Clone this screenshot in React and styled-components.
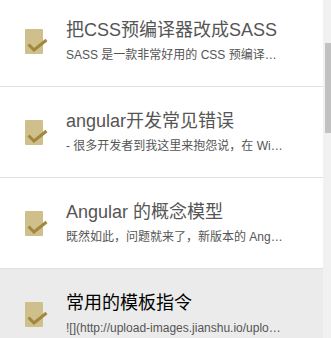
import React, { useLayoutEffect, useRef } from 'react';
import styled, { createGlobalStyle } from 'styled-components';

const GlobalStyle = createGlobalStyle`
  html, body {
    margin: 0;
    padding: 0;
    overflow: hidden;
    background: #fff;
  }
  body {
    font-family: "Liberation Sans", "Noto Sans CJK SC", sans-serif;
  }
`;

const Frame = styled.div`
  position: relative;
  height: 338px;
`;

const List = styled.ul`
  list-style: none;
  margin: 0;
  padding: 66px 8px 20px 0;
  height: 338px;
  box-sizing: border-box;
  overflow-y: scroll;
  scrollbar-width: none;

  &::-webkit-scrollbar {
    display: none;
  }
`;

// the browser's own bar is hidden in the screenshot, so paint one over the edge
const Track = styled.div`
  position: absolute;
  top: 0;
  right: 0;
  bottom: 0;
  width: 8px;
  background: #f1f1f1;
`;

const Thumb = styled.div`
  position: absolute;
  right: 0;
  width: 6px;
  background: #c1c1c1;
`;

const Row = styled.li`
  display: flex;
  align-items: center;
  height: 90px;
  padding-left: 25px;
  border-bottom: 1px solid #e0e0e0;
  background: ${p => (p.$active ? '#ebebeb' : '#fff')};
  cursor: pointer;
`;

const Check = styled.div`
  position: relative;
  flex: none;
  width: 18px;
  height: 25px;
  border-radius: 1px;
  background: #cfc08b;

  svg {
    position: absolute;
    left: 0;
    top: 0;
    overflow: visible;
  }
`;

const Text = styled.div`
  margin-left: 23px;
  width: 218px;
  min-width: 0;
`;

const Title = styled.div`
  font-size: 18px;
  line-height: 24px;
  color: ${p => (p.$active ? '#000' : '#555')};
  white-space: nowrap;
  overflow: hidden;
`;

const Summary = styled.div`
  margin-top: 4px;
  font-size: 12px;
  line-height: 18px;
  color: #555;
  white-space: nowrap;
  overflow: hidden;
  text-overflow: ellipsis;
`;

const notes = [
  { title: '使用 Gulp 构建前端项目', summary: 'Gulp 是一个基于流的自动化构建工具，可以帮助我们...' },
  { title: '把CSS预编译器改成SASS', summary: 'SASS 是一款非常好用的 CSS 预编译器，可以让我们更高效地编写样式' },
  { title: 'angular开发常见错误', summary: '- 很多开发者到我这里来抱怨说，在 Windows 上安装依赖总是失败' },
  { title: 'Angular 的概念模型', summary: '既然如此，问题就来了，新版本的 Angular 到底有哪些核心概念' },
  { title: '常用的模板指令', summary: '![](http://upload-images.jianshu.io/upload_images/1234567.png)' },
  { title: '组件之间的通讯', summary: '父组件通过属性绑定把数据传给子组件，子组件通过事件...' },
  { title: '依赖注入入门', summary: '依赖注入是 Angular 最核心的特性之一，理解它非常重要' },
  { title: '路由与导航', summary: '单页应用里，路由决定了用户看到的是哪一个视图' },
  { title: '表单验证', summary: '模板驱动表单和响应式表单各有各的适用场景' },
  { title: 'HTTP 请求与拦截器', summary: 'HttpClient 提供了简洁的 API 来和后端服务进行交互' },
  { title: '管道的使用', summary: '管道可以在模板中对数据进行格式化和转换' },
  { title: 'RxJS 基础', summary: 'Observable 是 RxJS 的核心，它代表一个可观察的数据流' },
  { title: '打包与部署', summary: '使用 ng build 命令可以生成用于生产环境的代码' },
];

const SCROLL_TOP = 161;

const CheckIcon = () => (
  <svg width="18" height="25" viewBox="0 0 18 25">
    <polyline
      points="3.5,15.5 9,21 21.5,11"
      fill="none"
      stroke="#a2863d"
      strokeWidth="3"
    />
  </svg>
);

export default function App() {
  const listRef = useRef(null);
  const [bar, setBar] = React.useState({ top: 43, height: 90 });

  useLayoutEffect(() => {
    const el = listRef.current;
    if (!el) return;
    el.scrollTop = SCROLL_TOP;
    const h = el.clientHeight;
    const full = el.scrollHeight;
    const height = Math.round((h * h) / full);
    const top = Math.round((el.scrollTop / (full - h)) * (h - height));
    setBar({ top, height });
  }, []);

  return (
    <>
      <GlobalStyle />
      <Frame>
        <List ref={listRef}>
          {notes.map((note, i) => (
            <Row key={i} $active={i === 4}>
              <Check>
                <CheckIcon />
              </Check>
              <Text>
                <Title $active={i === 4}>{note.title}</Title>
                <Summary>{note.summary}</Summary>
              </Text>
            </Row>
          ))}
        </List>
        <Track>
          <Thumb style={{ top: bar.top, height: bar.height }} />
        </Track>
      </Frame>
    </>
  );
}
